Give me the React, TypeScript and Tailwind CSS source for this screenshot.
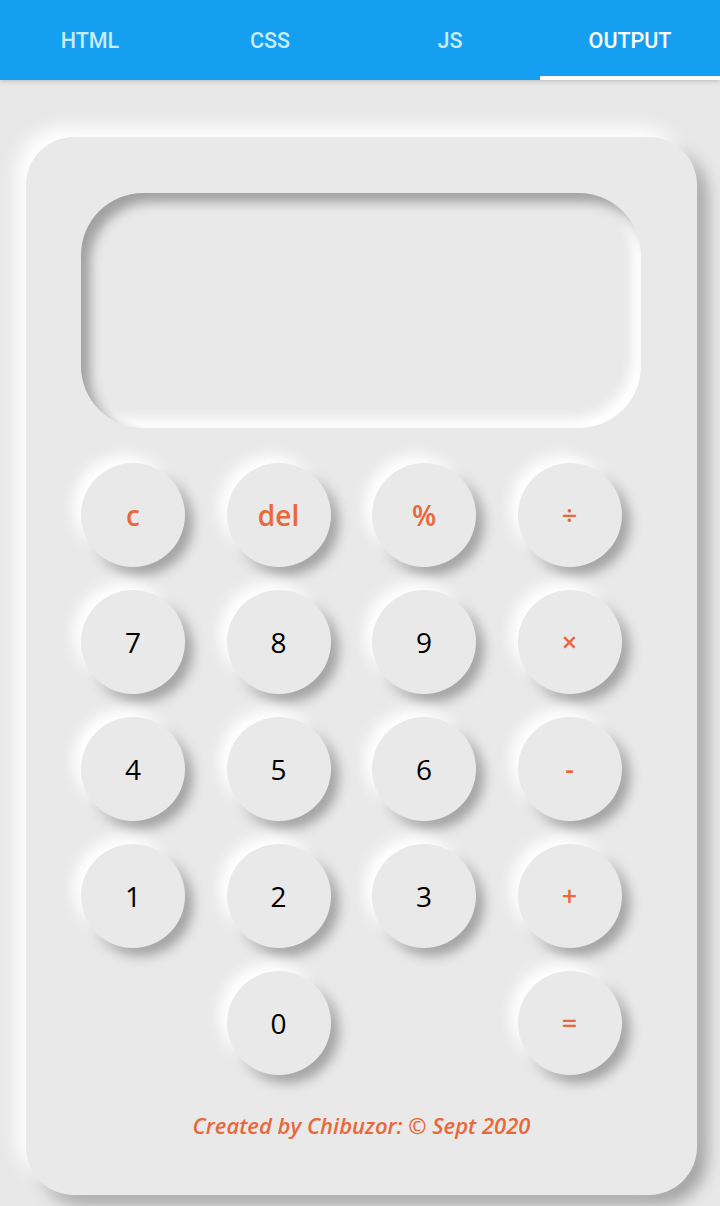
import React from "react";

const keys: { label: string; kind: "fn" | "num" | "op" | "empty" }[] = [
  { label: "c", kind: "fn" },
  { label: "del", kind: "fn" },
  { label: "%", kind: "fn" },
  { label: "÷", kind: "op" },
  { label: "7", kind: "num" },
  { label: "8", kind: "num" },
  { label: "9", kind: "num" },
  { label: "×", kind: "op" },
  { label: "4", kind: "num" },
  { label: "5", kind: "num" },
  { label: "6", kind: "num" },
  { label: "-", kind: "op" },
  { label: "1", kind: "num" },
  { label: "2", kind: "num" },
  { label: "3", kind: "num" },
  { label: "+", kind: "op" },
  { label: "", kind: "empty" },
  { label: "0", kind: "num" },
  { label: "", kind: "empty" },
  { label: "=", kind: "op" },
];

export default function App() {
  return (
    <div className="w-[720px] h-[1206px] bg-[#e8e8e8] overflow-hidden" style={{ fontFamily: "'Open Sans', sans-serif" }}>
      <div className="h-[80px] bg-[#159ff0] grid grid-cols-4 shadow-[0_2px_4px_rgba(0,0,0,0.15)]" style={{ fontFamily: "Roboto, sans-serif" }}>
        {["HTML", "CSS", "JS", "OUTPUT"].map((t, i) => (
          <div key={t} className="relative flex items-center justify-center pt-[3px]">
            <span className={`text-[21.5px] font-medium ${i === 3 ? "text-white" : "text-[#c8ecfc]"}`}>{t}</span>
            {i === 3 && <div className="absolute left-0 right-0 bottom-0 h-[4px] bg-white" />}
          </div>
        ))}
      </div>
      <div className="pt-[57px] pl-[26px]">
        <div className="w-[671px] h-[1058px] rounded-[48px] bg-[#e9e9e9] shadow-[-10px_-10px_18px_#ffffff,10px_10px_16px_#a3a3a3] pt-[56px] px-[55px] flex flex-col">
          <div className="w-[560px] h-[235px] rounded-[62px] bg-[#e9e9e9] shadow-[inset_9px_9px_12px_#a0a0a0,inset_-9px_-9px_12px_#ffffff]" />
          <div className="mt-[35px] grid grid-cols-[repeat(4,104px)] gap-x-[41.5px] gap-y-[23px]">
            {keys.map((k, i) =>
              k.kind === "empty" ? (
                <div key={i} className="w-[104px] h-[104px]" />
              ) : (
                <div
                  key={i}
                  className="w-[104px] h-[104px] rounded-full bg-[#e9e9e9] shadow-[-8px_-8px_14px_#ffffff,8px_8px_12px_#a3a3a3] flex items-center justify-center"
                >
                  <span
                    className={
                      k.kind === "num"
                        ? "text-[28px] font-medium text-black"
                        : k.kind === "fn"
                        ? "text-[28px] font-semibold text-[#e8683a]"
                        : "text-[27px] font-semibold text-[#e8683a]"
                    }
                  >
                    {k.label}
                  </span>
                </div>
              )
            )}
          </div>
          <div className="mt-[34px] text-center text-[22px] italic font-semibold text-[#e8683a]">
            Created by Chibuzor: © Sept 2020
          </div>
        </div>
      </div>
    </div>
  );
}
